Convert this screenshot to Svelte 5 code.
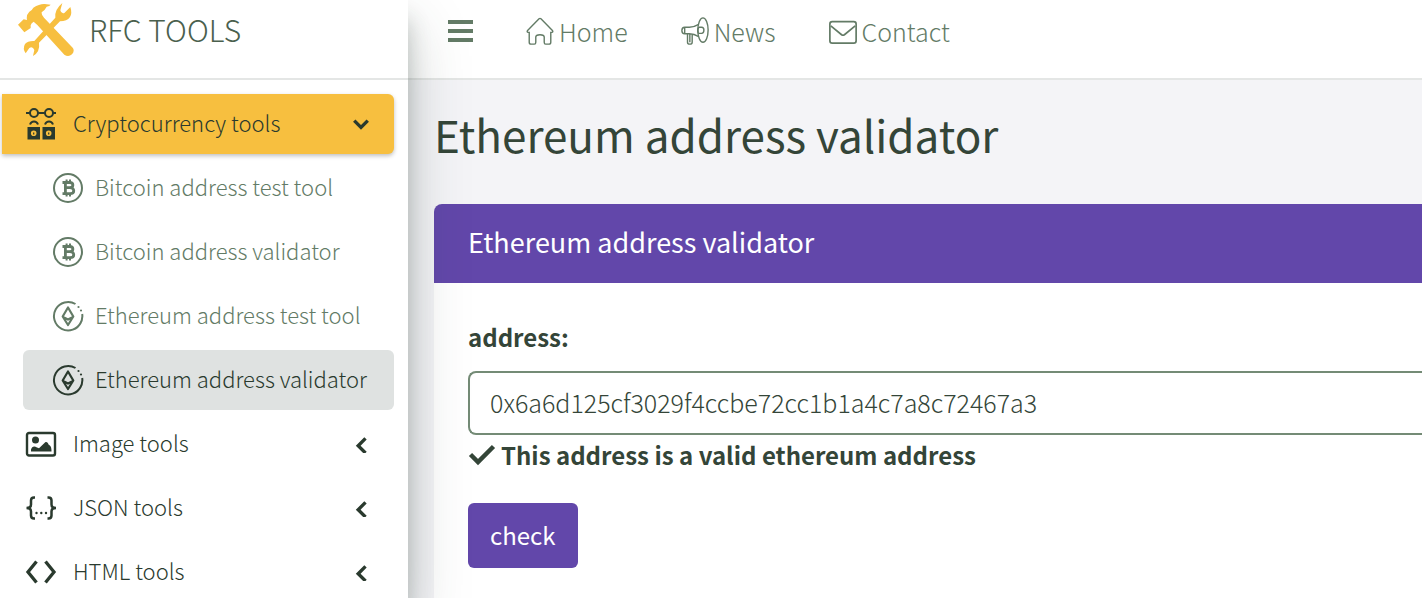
<script>
  const subItems = [
    { label: 'Bitcoin address test tool', icon: 'btc' },
    { label: 'Bitcoin address validator', icon: 'btc' },
    { label: 'Ethereum address test tool', icon: 'eth' },
    { label: 'Ethereum address validator', icon: 'eth', active: true }
  ];
  const groups = [
    { label: 'Image tools', icon: 'image' },
    { label: 'JSON tools', icon: 'json' },
    { label: 'HTML tools', icon: 'html' }
  ];
  let address = $state('0x6a6d125cf3029f4ccbe72cc1b1a4c7a8c72467a3');
</script>

{#snippet icon(name)}
  <svg class="icon" viewBox="0 0 32 32" aria-hidden="true">
    {#if name === 'btc'}
      <circle cx="16" cy="16" r="14" fill="none" stroke="currentColor" stroke-width="2" />
      <g fill="none" stroke="currentColor" stroke-width="2.8">
        <path d="M10.5 10.5H17.5C22 10.5 22 15.7 17.5 15.7H13M13.4 10.5V21.6M10.5 21.6H18C23 21.6 23 15.7 18 15.7" />
        <path d="M14.6 7.5V10.5M18 7.5V10.5M14.6 21.5V24.5M18 21.5V24.5" stroke-width="2" />
      </g>
    {:else if name === 'eth'}
      <path d="M23.5 4A14.200 14.200 0 1 0 29 22.200M28 24A14.200 14.200 0 0 0 30.200 14" fill="none" stroke="currentColor" stroke-width="2" />
      <circle cx="26.500" cy="7" r="1.100" fill="currentColor" />
      <circle cx="29" cy="10.500" r="1.100" fill="currentColor" />
      <path d="M16 7.500L21.300 16.500L16 25L10.700 16.500ZM11 17L16 19.600L21 17" fill="none" stroke="currentColor" stroke-width="2.200" stroke-linejoin="round" />
    {:else if name === 'crypto'}
      <g fill="none" stroke="currentColor" stroke-width="2">
        <circle cx="9" cy="5" r="4" />
        <circle cx="24" cy="5" r="4" />
        <path d="M1 5H5M13 5H20M28 5H31M5 16.500C6.500 12.500 11.500 12.500 13 16.500M20 16.500C21.500 12.500 26.500 12.500 28 16.500" />
      </g>
      <path fill="currentColor" fill-rule="evenodd" d="M2.500 19H15V31.500H2.500ZM8.700 22.500A2.800 2.800 0 1 0 8.700 28.100A2.800 2.800 0 1 0 8.700 22.500ZM17.500 19H30V31.500H17.500ZM23.700 22.500A2.800 2.800 0 1 0 23.700 28.100A2.800 2.800 0 1 0 23.700 22.500Z" />
      <path d="M8.700 24.500V26.500M23.700 24.500V26.500" stroke="currentColor" stroke-width="1.200" />
    {:else if name === 'image'}
      <rect x="2" y="5" width="28" height="22.500" rx="2" fill="none" stroke="currentColor" stroke-width="2.400" />
      <circle cx="10.500" cy="12" r="3.500" fill="currentColor" />
      <path d="M6 23.500V21.500C7 18.500 9 17.500 12 19.500L14 20.300L20 14.500C21.500 13.500 23 14.500 23.500 16.500C25.500 17.500 26.500 19 26.500 23.500Z" fill="currentColor" />
    {:else if name === 'json'}
      <g fill="none" stroke="currentColor" stroke-width="2.500">
        <path d="M10 5.500H9Q6 5.500 6 8.500V12.500Q6 16 1.500 16Q6 16 6 19.500V23.500Q6 26.500 9 26.500H10" />
        <path d="M22.500 5.500H23.500Q26.500 5.500 26.500 8.500V12.500Q26.500 16 31 16Q26.500 16 26.500 19.500V23.500Q26.500 26.500 23.500 26.500H22.500" />
      </g>
      <g fill="currentColor"><circle cx="11.500" cy="21" r="1.200" /><circle cx="16.300" cy="21" r="1.200" /><circle cx="21" cy="21" r="1.200" /></g>
    {:else if name === 'html'}
      <path d="M11.500 5.500L3 16L11.500 26.500M20.500 5.500L29 16L20.500 26.500" fill="none" stroke="currentColor" stroke-width="3.300" />
    {:else if name === 'home'}
      <path d="M4.500 17.500H3.500C2 17.500 2 16.300 3 15.300L15 3Q16 2 17 3L29 15.300C30 16.300 30 17.500 28.500 17.500H27.500V28Q27.500 30 25.500 30H22Q20.500 30 20.500 28V22.500Q20.500 20 16 20Q11.500 20 11.500 22.500V28Q11.500 30 10 30H6.500Q4.500 30 4.500 28Z" fill="none" stroke="currentColor" stroke-width="1.500" />
    {:else if name === 'news'}
      <g fill="none" stroke="currentColor" stroke-width="1.500">
        <ellipse cx="24.500" cy="15" rx="5.500" ry="13" />
        <path d="M20 9Q15 12 10 12H5Q2 12 2 15.500Q2 19 5 19H10Q15 19 20 22M5 12V19M8 19V28Q8 30 10.500 30Q13 30 13 28V19.500M10.500 19V28M20 12H23Q25.500 12 25.500 15Q25.500 18.500 23 18.500H19.500M20 12Q18 15 19.500 18.500" />
      </g>
    {:else}
      <g fill="none" stroke="currentColor" stroke-width="1.800">
        <rect x="2" y="6" width="28" height="23" rx="2.500" />
        <path d="M3 10.500L14.500 20Q16 21 17.500 20L29 10.500" />
      </g>
    {/if}
  </svg>
{/snippet}

<div class="shell">
  <aside>
    <a class="brand" href="#top">
      <svg class="logo" viewBox="51 3 174 168" aria-hidden="true">
        <path d="M54 74L71 58L81 60Q78 45 88 35Q97 30 100 23Q119 11 134 12L152 14Q149 19 140 20Q134 32 125 37Q124 45 132 53L218 143Q225 152 216 163Q205 172 193 164L112 75L101 65Q94 68 92 76L92 84L73 97Z" />
        <path d="M166 53Q163 29 187 9L181 31Q183 42 193 39L211 21Q217 39 210 51Q201 64 180 64L117 128Q121 155 99 168L103 150Q98 138 88 144L77 160Q67 146 75 132Q83 122 103 123Z" />
      </svg>
      <span>RFC TOOLS</span>
    </a>
    <nav class="menu" aria-label="Tools">
      <a class="item open" href="#crypto">
        {@render icon('crypto')}<span>Cryptocurrency tools</span>
        <svg class="arrow" viewBox="0 0 16 16" aria-hidden="true"><path d="M2 5L8 11L14 5" /></svg>
      </a>
      {#each subItems as item}
        <a class="item sub" class:active={item.active} href="#tool">
          {@render icon(item.icon)}<span>{item.label}</span>
        </a>
      {/each}
      {#each groups as item}
        <a class="item" href="#group">
          {@render icon(item.icon)}<span>{item.label}</span>
          <svg class="arrow" viewBox="0 -2 16 16" aria-hidden="true"><path d="M12 1L5.500 7.500L12 14" /></svg>
        </a>
      {/each}
    </nav>
  </aside>

  <main>
    <header>
      <button class="burger" aria-label="Toggle menu"><i></i><i></i><i></i></button>
      <a href="#home">{@render icon('home')}<span>Home</span></a>
      <a href="#news">{@render icon('news')}<span>News</span></a>
      <a href="#contact">{@render icon('mail')}<span>Contact</span></a>
    </header>
    <h1>Ethereum address validator</h1>
    <section>
      <h2>Ethereum address validator</h2>
      <form onsubmit={(e) => e.preventDefault()}>
        <label for="address">address:</label>
        <input id="address" type="text" bind:value={address} spellcheck="false" />
        <p>
          <svg viewBox="0 0 28 24" aria-hidden="true"><path d="M2.500 11.500L10 19L25.500 3.500" /></svg>
          <span>This address is a valid ethereum address</span>
        </p>
        <button class="check">check</button>
      </form>
    </section>
  </main>
</div>

<style>
  :global(body) { margin: 0; background: #fff; }
  .shell, .shell * { box-sizing: border-box; }
  .shell {
    display: flex;
    height: calc(100vh - 3px);
    margin-right: 3px;
    overflow: hidden;
    color: #344538;
    font-family: "Noto Sans CJK SC", "Open Sans", sans-serif;
    font-size: 24px;
    line-height: 32px;
  }
  a { color: inherit; text-decoration: none; }
  .icon { width: 32px; height: 32px; flex: none; }
  aside {
    position: relative;
    z-index: 1;
    flex: none;
    width: 408px;
    background: #fff;
    box-shadow: 0 28px 56px rgba(52, 69, 60, 0.25), 0 20px 20px rgba(52, 69, 60, 0.25);
  }
  .brand {
    display: flex;
    align-items: center;
    gap: 14px;
    height: 80px;
    padding: 0 0 20px 17px;
    border-bottom: 2px solid #e4e6e5;
    color: #4a604d;
    font-size: 30px;
    font-weight: 300;
  }
  .logo { width: 58px; height: 56px; fill: #f7bf3f; }
  .menu {
    display: flex;
    flex-direction: column;
    gap: 4px;
    padding: 14px 14px 0 2px;
  }
  .item {
    display: flex;
    align-items: center;
    gap: 16px;
    height: 60px;
    padding: 0 24px 0 23px;
    border-radius: 6px;
    color: #2a3a2e;
    font-size: 22px;
    font-weight: 300;
    white-space: nowrap;
  }
  .item span { padding-bottom: 4px; }
  .item.open {
    border-radius: 0 6px 6px 0;
    background: #f7bf3f;
    box-shadow: 0 2px 4px rgba(0, 0, 0, 0.25);
  }
  .item.sub {
    gap: 11px;
    margin-left: 21px;
    padding-left: 29px;
    color: #637b66;
  }
  .item.active { background: #dfe2e1; color: #2a3a2e; }
  .arrow { width: 18px; height: 18px; margin-left: auto; }
  .arrow path { fill: none; stroke: currentColor; stroke-width: 3; }
  main { flex: 1; min-width: 0; background: #f4f4f7; }
  header {
    display: flex;
    align-items: center;
    height: 80px;
    padding: 0 40px 16px;
    gap: 52px;
    border-bottom: 2px solid #e4e6e5;
    background: #fff;
    color: #637b66;
    font-size: 25px;
    font-weight: 300;
  }
  header a { display: flex; align-items: center; gap: 4px; }
  header .icon { width: 30px; height: 30px; }
  .burger {
    display: flex;
    flex-direction: column;
    gap: 5px;
    width: 25px;
    padding: 0;
    border: 0;
    background: none;
  }
  .burger i { height: 4px; background: #637b66; }
  h1 {
    margin: 22px 0 38px 26px;
    font-size: 44px;
    font-weight: 400;
    line-height: 64px;
  }
  section {
    margin-left: 26px;
    min-height: 100%;
    border-radius: 8px 0 0 0;
    background: #fff;
    overflow: hidden;
  }
  h2 {
    margin: 0;
    padding: 22px 34px 25px;
    background: #6247aa;
    color: #fff;
    font-size: 27px;
    font-weight: 400;
    line-height: 32px;
  }
  form { padding: 38px 0 30px 34px; }
  label { display: block; font-weight: 700; }
  input {
    display: block;
    width: 100%;
    height: 64px;
    margin: 18px 0 4px;
    padding: 0 20px 2px;
    border: 2px solid #748b76;
    border-right: 0;
    border-radius: 8px 0 0 8px;
    background: #fff;
    color: inherit;
    font: inherit;
    font-size: 25px;
    font-weight: 300;
    outline: 0;
  }
  p {
    display: flex;
    align-items: center;
    gap: 5px;
    margin: 0 0 32px;
    font-weight: 700;
  }
  p svg { width: 28px; height: 24px; }
  p path { fill: none; stroke: currentColor; stroke-width: 4.500; }
  .check {
    height: 65px;
    padding: 0 22px 2px;
    border: 0;
    border-radius: 6px;
    background: #6247aa;
    color: #fff;
    font: inherit;
  }
</style>
